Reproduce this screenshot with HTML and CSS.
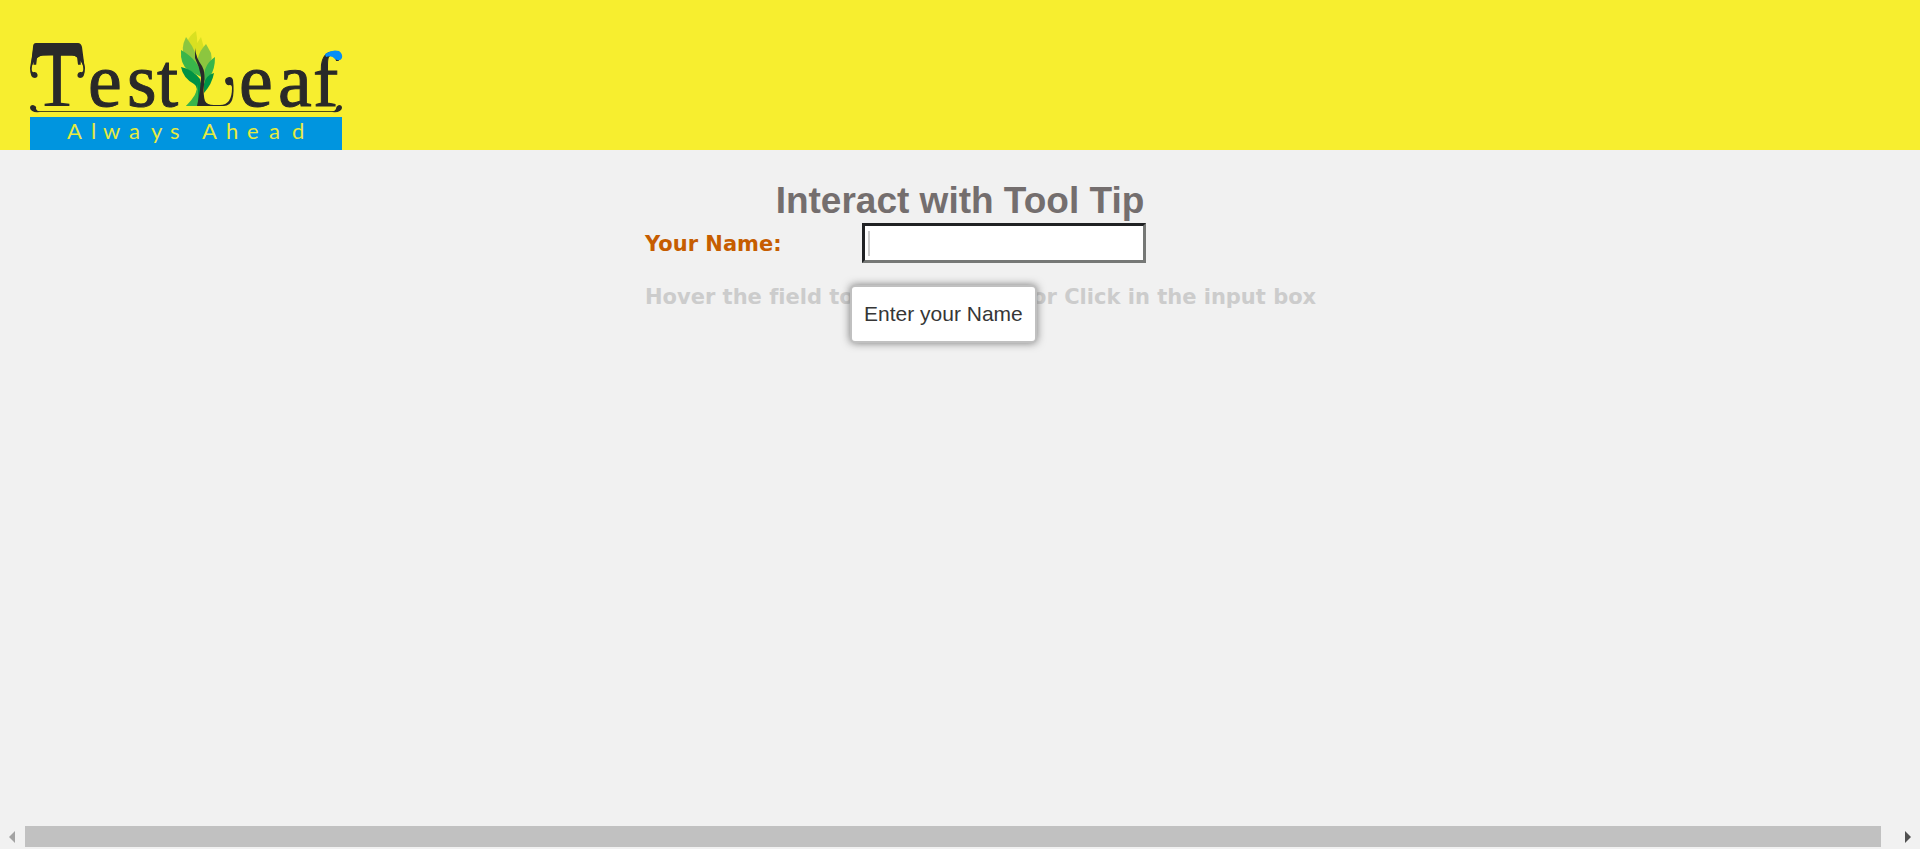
FILE: index.html
```html
<!DOCTYPE html>
<html lang="en">
<head>
<meta charset="utf-8">
<title>Interact with Tool Tip</title>
<link rel="stylesheet" href="styles.css">
</head>
<body>
<header class="site-header">
  <a class="logo" href="#" aria-label="TestLeaf - Always Ahead">
    <svg class="logo-art" viewBox="0 0 312 120" width="312" height="120">
      <!-- ornaments around the capital -->
      <g class="ink">
        <path d="M6 13 H48 Q51 13 52 17 L55 40 Q50 24 36 24 H18 Q5 25 1 38 L3 17 Q3 13 6 13Z"/>
        <path d="M3 20 L0 38 Q0 48 5 48 A3 3 0 0 0 4 42 Q1 43 2 36 Q4 28 10 26Z"/>
        <path d="M51 20 L55 38 Q55 48 50 48 A3 3 0 0 1 51 42 Q54 43 53 36 Q51 28 45 26Z"/>
      </g>
      <g class="letters">
        <text class="cap" x="2" y="76">T</text>
        <text class="low" y="76" x="58 97 127">est</text>
        <text class="low" y="76" x="209 248">ea</text>
        <text class="low" y="76" x="283">f</text>
      </g>
      <path fill="#078ff5" d="M295 24 Q302 19 309 21 Q313 24 312 28 Q310 32 305 29 Q302 25 296 27Z"/>
      <!-- tree -->
      <path fill="#d9e021" d="M166 1 Q152 11 157 27 L165 34 Q169 15 166 1Z"/>
      <path fill="#d9e021" d="M171 7 Q162 18 165 34 L169 34 Q176 26 174 18Z"/>
      <path fill="#8cc63f" d="M156 7 Q150 19 155 28 L169 43 Q170 25 156 7Z"/>
      <path fill="#8cc63f" d="M176 14 Q163 28 170 41 L174 44 Q184 34 181 23Z"/>
      <path fill="#39b54a" d="M151 20 Q150 34 158 40 L173 48 Q169 30 151 20Z"/>
      <path fill="#39b54a" d="M185 27 Q171 36 175 55 L180 46 Q185 40 185 27Z"/>
      <path fill="#009245" d="M151 37 Q153 48 164 54 Q169 57 165 67 Q161 75 156 76 H169 Q174 62 170 49 Q162 39 151 37Z"/>
      <path fill="#009245" d="M184 43 Q176 45 174 54 V63 Q182 54 184 43Z"/>
      <path fill="#39b54a" d="M168 54 Q168 64 156 76 H168Z"/>
      <path class="ink" d="M165 18 Q166 28 172 36 Q176 43 174 55 Q173 65 175 71 Q177 75 184 75 H190 Q202 75 202 58 Q202 55 200 55 A4 4 0 1 1 203 50 Q206 76 194 76 H167 Q171 58 171 46 Q169 36 165 28Z"/>
      <!-- underline with curled ends -->
      <g class="ink">
        <path class="rule" d="M8 81.500 H304"/>
        <path d="M0 78 Q0 75 3 75 Q7 76 6 79 Q7 81 10 82 Q1 83 0 78Z"/>
        <path d="M312 78 Q312 75 309 75 Q306 76 306 79 Q305 81 302 82 Q311 83 312 78Z"/>
      </g>
      <rect fill="#0095df" y="87" width="312" height="33"/>
      <text class="tagline" y="109" x="37 61 73 99 121 140 168 172 196 217 239 262">Always Ahead</text>
    </svg>
  </a>
</header>
<main class="content">
  <h1 class="title">Interact with Tool Tip</h1>
  <form class="name-form">
    <label class="name-label" for="age">Your Name:</label>
    <div class="field">
      <input class="name-input" id="age" type="text" aria-describedby="tip">
      <span class="caret"></span>
      <div class="tooltip" id="tip" role="tooltip">Enter your Name</div>
    </div>
    <p class="hint">Hover the field to see its tooltip or Click in the input box</p>
  </form>
</main>
<div class="scrollbar">
  <button class="arrow" type="button" aria-label="Scroll left"><svg width="6" height="12" viewBox="0 0 6 12"><path fill="#a3a3a3" d="M6 0V12L0 6Z"/></svg></button>
  <div class="thumb"></div>
  <button class="arrow arrow-right" type="button" aria-label="Scroll right"><svg width="6" height="12" viewBox="0 0 6 12"><path fill="#505050" d="M0 0V12L6 6Z"/></svg></button>
</div>
</body>
</html>
```
FILE: styles.css
```css
* { box-sizing: border-box; }
body {
  margin: 0;
  min-height: 100vh;
  display: flex;
  flex-direction: column;
  background: #f1f1f1;
  font-family: "Liberation Sans", Arial, sans-serif;
}
.site-header { background: #f7ee2f; padding: 30px 30px 0; }
.logo, .logo-art { display: block; width: 312px; }
.logo-art { overflow: visible; }
.ink { fill: #292929; }
.rule { stroke: #4f4b1b; stroke-width: 1; }
.letters { fill: #292929; font-family: "Liberation Serif", "Times New Roman", serif; }
.cap { font-size: 82px; }
.low { font-size: 76px; stroke: #292929; stroke-width: 1; }
.tagline { fill: #e6ea40; font-family: Lato, sans-serif; font-size: 22px; }
.content { flex: 1; padding-top: 27px; }
.title {
  margin: 0;
  text-align: center;
  font-size: 37px;
  line-height: 47px;
  margin-bottom: -1px;
  color: #746e6e;
}
.name-form {
  width: 100%;
  max-width: 630px;
  margin: 0 auto;
  display: grid;
  grid-template-columns: 217px 1fr;
  row-gap: 22px;
  align-items: center;
  font: bold 21px/24px "DejaVu Sans", Verdana, sans-serif;
  font-variant-ligatures: none;
}
.name-label { padding-top: 2px; color: #c65d00; }
.field { position: relative; width: 284px; }
.name-input {
  display: block;
  width: 100%;
  height: 40px;
  padding: 3px;
  border: 3px solid;
  border-color: #202224 #767876 #767876 #202224;
  background: #fff;
  font: 21px "Liberation Sans", Arial, sans-serif;
  outline: 0;
}
.caret {
  position: absolute;
  left: 6px;
  top: 8px;
  width: 2px;
  height: 25px;
  background: #ccc;
}
.tooltip {
  position: absolute;
  left: -12px;
  top: 62px;
  padding: 14px 12px;
  border: 2px solid #c0c0c0;
  border-radius: 5px;
  background: #fff;
  box-shadow: 0 0 8px #777;
  color: #363636;
  font: 21px/26px "Liberation Sans", Arial, sans-serif;
  white-space: nowrap;
}
.hint {
  grid-column: 1 / -1;
  margin: 0;
  color: #ccc;
  white-space: nowrap;
}
.scrollbar { display: flex; height: 23px; padding-bottom: 2px; }
.arrow {
  display: flex;
  align-items: center;
  justify-content: flex-start;
  width: 25px;
  padding: 0 9px;
  border: 0;
  background: transparent;
}
.arrow-right { width: 39px; justify-content: flex-end; }
.arrow svg { flex: none; }
.thumb { flex: 1; background: #c1c1c1; }
```
